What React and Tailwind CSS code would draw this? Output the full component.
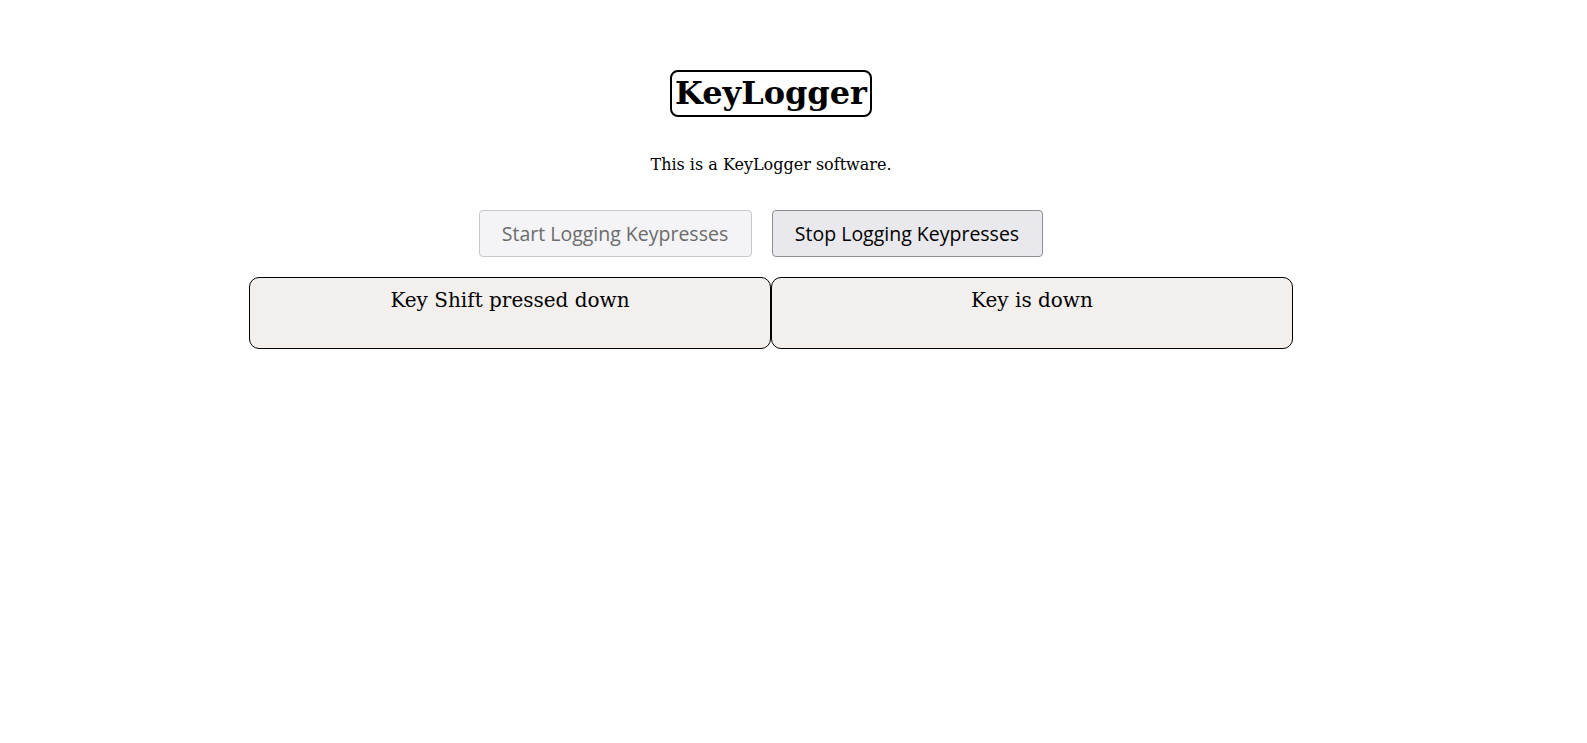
export default function App() {
  return (
    <div className="min-h-screen bg-white">
      <div className="flex w-[1542px] flex-col items-center pt-[70px]">
        <h1 className="rounded-lg border-2 border-black px-[3px] font-['DejaVu_Serif',serif] text-[32px] font-bold leading-[43px] text-black">
          KeyLogger
        </h1>
        <p className="mt-[36px] font-['DejaVu_Serif',serif] text-base text-black">
          This is a KeyLogger software.
        </p>
        <div className="mr-[21px] mt-[33px] flex gap-[20px] font-['Open_Sans',sans-serif] text-[19.5px]">
          <button className="h-[47px] w-[273px] rounded border border-[#c8c8cc] bg-[#f4f4f6] text-[#6b6b6b]">
            Start Logging Keypresses
          </button>
          <button className="h-[47px] w-[271px] rounded border border-[#8e8e93] bg-[#e9e9ed] text-black">
            Stop Logging Keypresses
          </button>
        </div>
        <div className="mt-[20px] flex font-['DejaVu_Serif',serif] text-[20px] text-black">
          <div className="h-[72px] w-[522px] rounded-[10px] border border-black bg-[#f2efed] pt-[7px] text-center">
            Key Shift pressed down
          </div>
          <div className="h-[72px] w-[522px] rounded-[10px] border border-black bg-[#f2efed] pt-[7px] text-center">
            Key is down
          </div>
        </div>
      </div>
    </div>
  )
}
